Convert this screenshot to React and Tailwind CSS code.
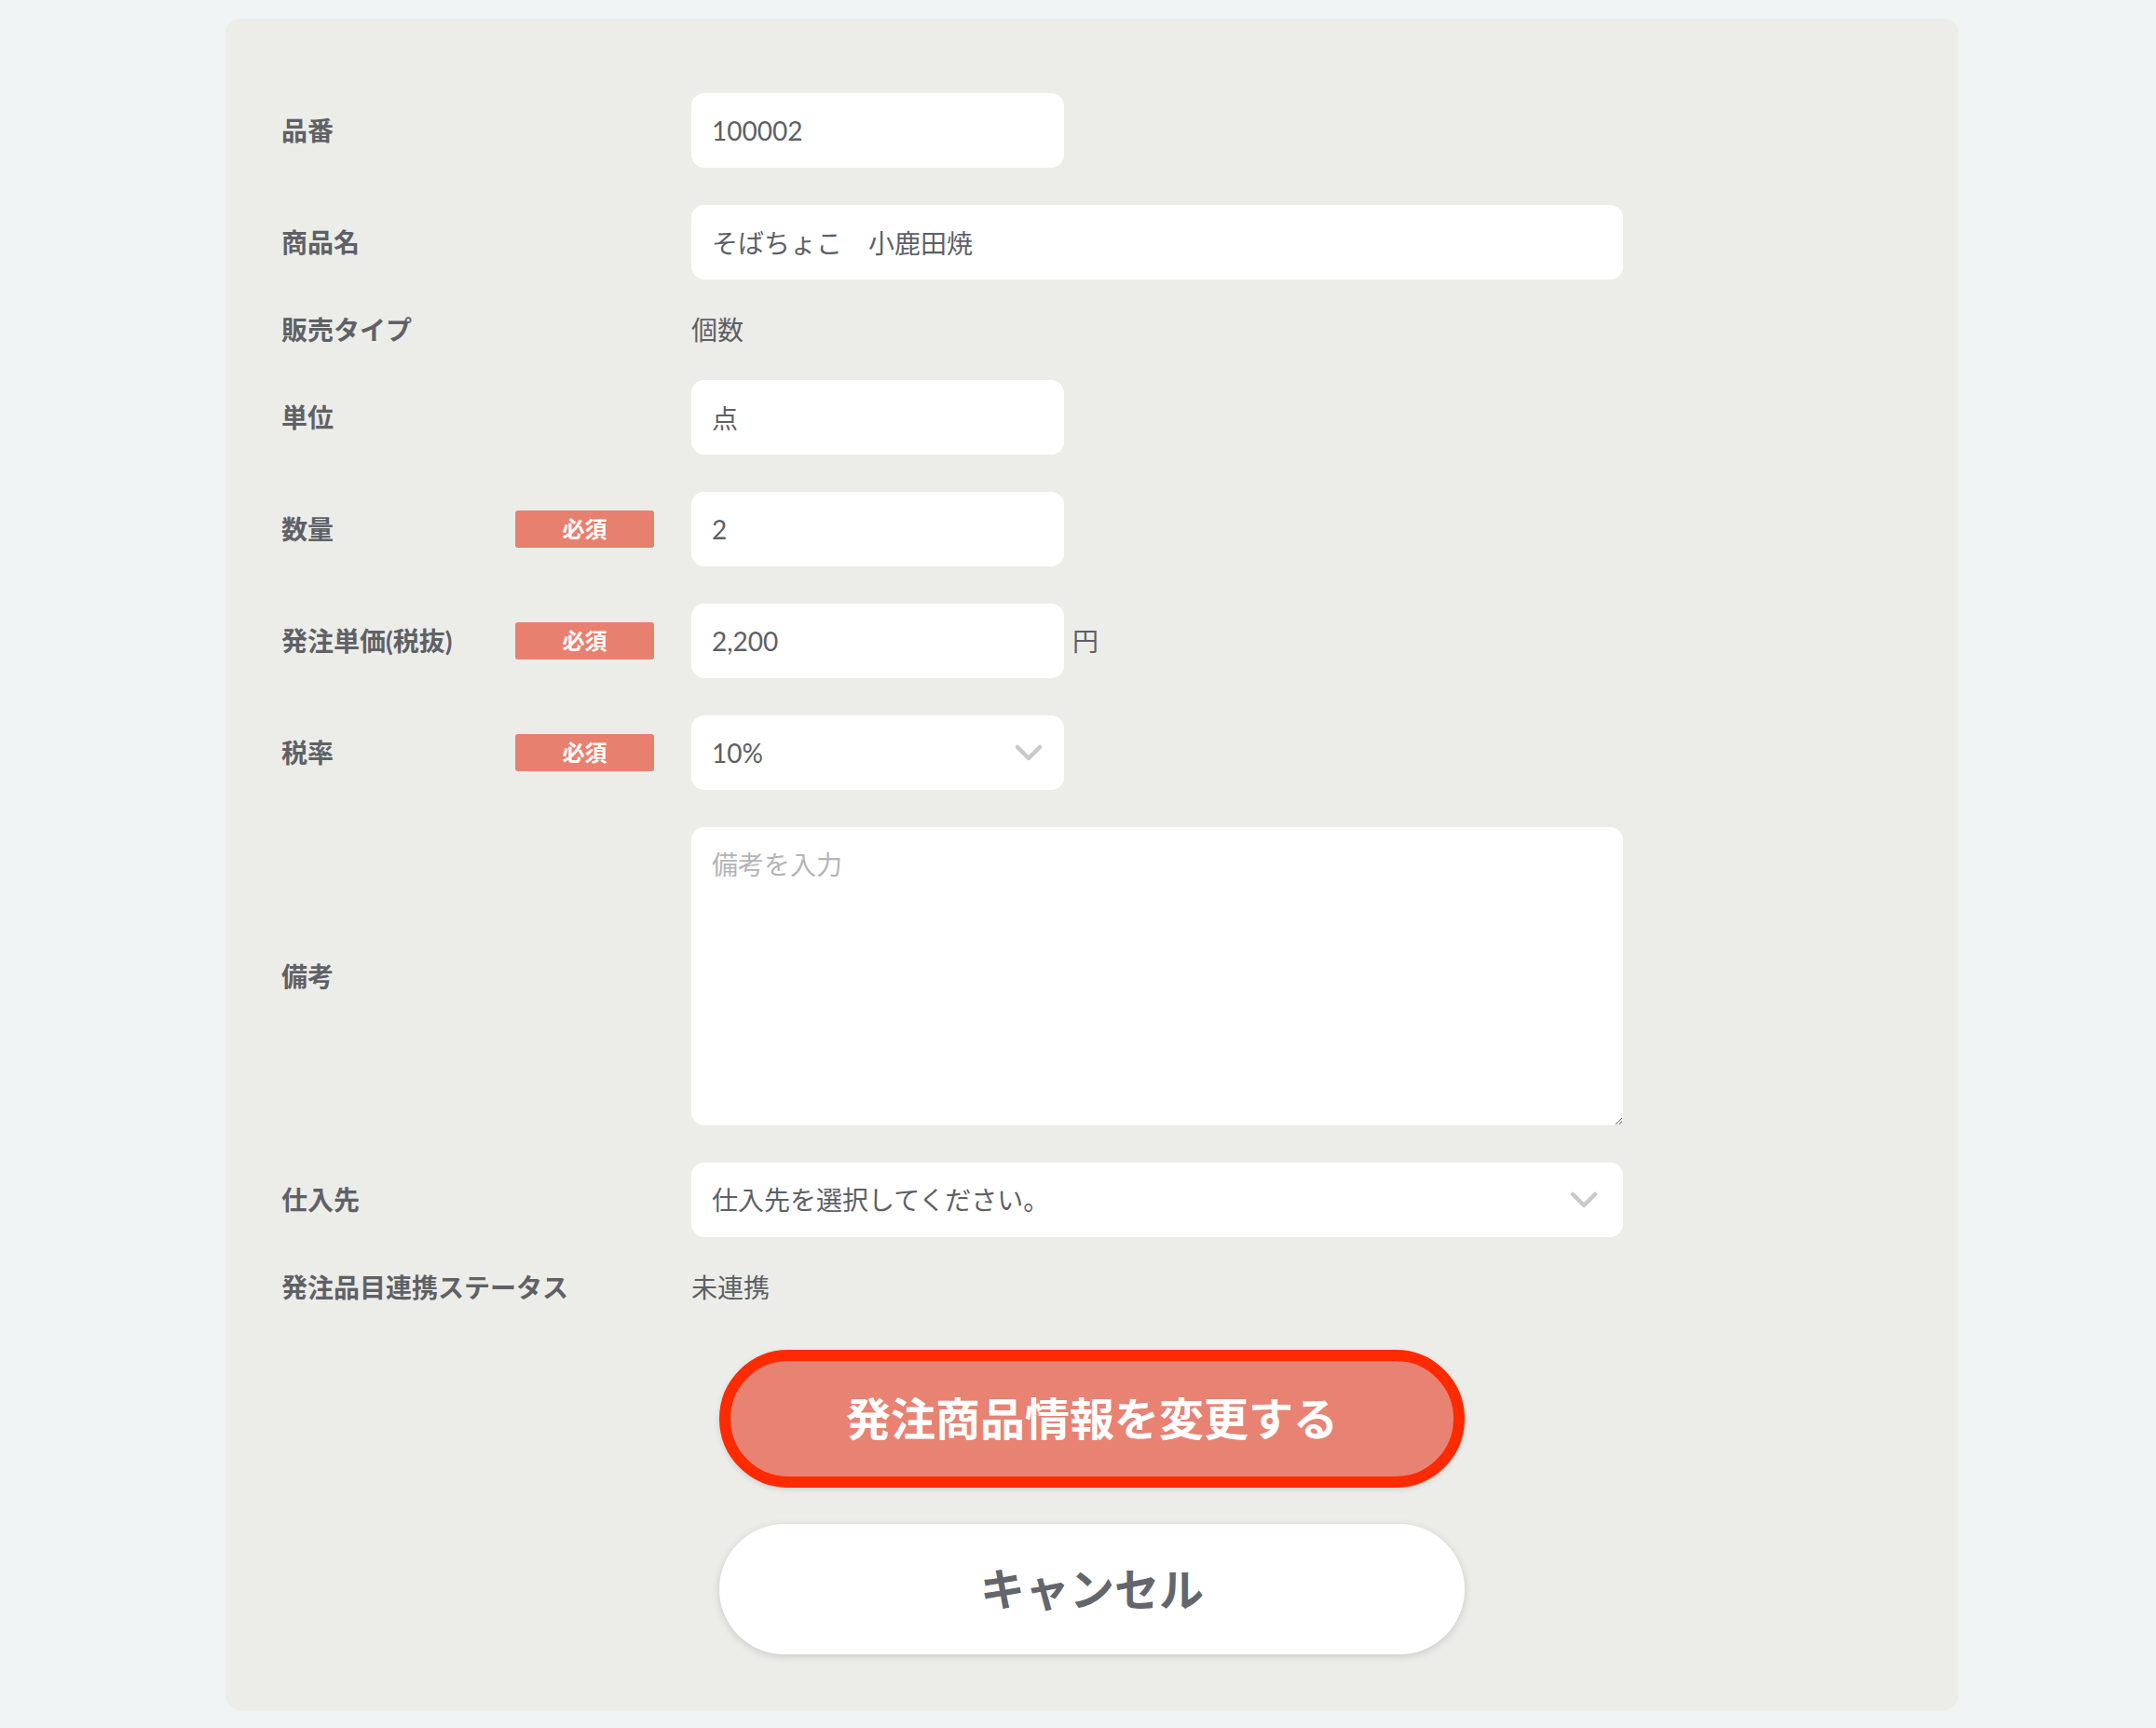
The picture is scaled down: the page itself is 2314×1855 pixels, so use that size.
import React from "react";

const font = "font-['Lato','Noto_Sans_CJK_JP',sans-serif]";

const Chevron = () => (
  <svg width="32" height="20" viewBox="0 0 32 20" fill="none" className="pointer-events-none">
    <polyline points="4,4 16,16 28,4" stroke="#c9c9c9" strokeWidth="4.5" strokeLinecap="round" strokeLinejoin="round" />
  </svg>
);

const Required = () => (
  <span className="flex items-center justify-center w-[149px] h-[40px] rounded-[3px] bg-[#e8806f] text-white text-[24px] font-bold leading-none">
    必須
  </span>
);

const Row = ({ label, required, children }) => (
  <div className="flex items-center">
    <div className="w-[251px] shrink-0 whitespace-nowrap text-[28px] leading-[28px] font-bold text-[#5f6167]">
      {label}
    </div>
    <div className="w-[149px] mr-[40px] shrink-0">{required && <Required />}</div>
    {children}
  </div>
);

const inputCls =
  "h-[80px] rounded-[14px] bg-white px-[22px] text-[28px] text-[#5d5f66] outline-none border-0";

const App = () => {
  return (
    <div className={`min-h-screen w-full bg-[#f1f4f4] pt-[20px] ${font}`}>
      <div className="ml-[242px] w-[1860px] rounded-[16px] bg-[#ecede8] pt-[80px] pb-[60px] px-[60px]">
        {/* Form rows */}
        <div className="flex flex-col gap-[40px]">
          <Row label="品番">
            <input readOnly defaultValue="100002" className={`${inputCls} w-[400px]`} />
          </Row>

          <Row label="商品名">
            <input readOnly defaultValue="そばちょこ　小鹿田焼" className={`${inputCls} w-[1000px]`} />
          </Row>

          <Row label="販売タイプ">
            <span className="text-[28px] leading-[28px] text-[#5d5f66]">個数</span>
          </Row>

          <Row label="単位">
            <input readOnly defaultValue="点" className={`${inputCls} w-[400px]`} />
          </Row>

          <Row label="数量" required>
            <input readOnly defaultValue="2" className={`${inputCls} w-[400px]`} />
          </Row>

          <Row label="発注単価(税抜)" required>
            <input readOnly defaultValue="2,200" className={`${inputCls} w-[400px]`} />
            <span className="ml-[9px] text-[28px] leading-[28px] text-[#5d5f66]">円</span>
          </Row>

          <Row label="税率" required>
            <div className="relative w-[400px]">
              <select defaultValue="10%" className={`${inputCls} w-full appearance-none`}>
                <option>10%</option>
                <option>8%</option>
              </select>
              <span className="absolute right-[22px] top-[30px]">
                <Chevron />
              </span>
            </div>
          </Row>

          <Row label="備考">
            <textarea
              placeholder="備考を入力"
              className="w-[1000px] h-[320px] rounded-[14px] bg-white px-[22px] pt-[20px] pb-[14px] text-[28px] leading-[40px] text-[#5d5f66] placeholder:text-[#b3b4b8] outline-none border-0"
            />
          </Row>

          <Row label="仕入先">
            <div className="relative w-[1000px]">
              <select defaultValue="" className={`${inputCls} w-full appearance-none`}>
                <option value="">仕入先を選択してください。</option>
              </select>
              <span className="absolute right-[26px] top-[30px]">
                <Chevron />
              </span>
            </div>
          </Row>

          <Row label="発注品目連携ステータス">
            <span className="text-[28px] leading-[28px] text-[#5d5f66]">未連携</span>
          </Row>
        </div>

        {/* Buttons */}
        <div className="flex flex-col items-center mt-[53px] gap-[39px]">
          <button
            type="button"
            className="w-[800px] h-[148px] rounded-full border-[12px] border-[#ff2a00] bg-[#e88273] text-white text-[48px] font-bold shadow-[0_2px_6px_rgba(0,0,0,0.12)]"
          >
            発注商品情報を変更する
          </button>
          <button
            type="button"
            className="w-[800px] h-[140px] rounded-full bg-white text-[#63666c] text-[48px] font-bold shadow-[0_2px_8px_rgba(0,0,0,0.15)]"
          >
            キャンセル
          </button>
        </div>
      </div>
    </div>
  );
};

export default App;
